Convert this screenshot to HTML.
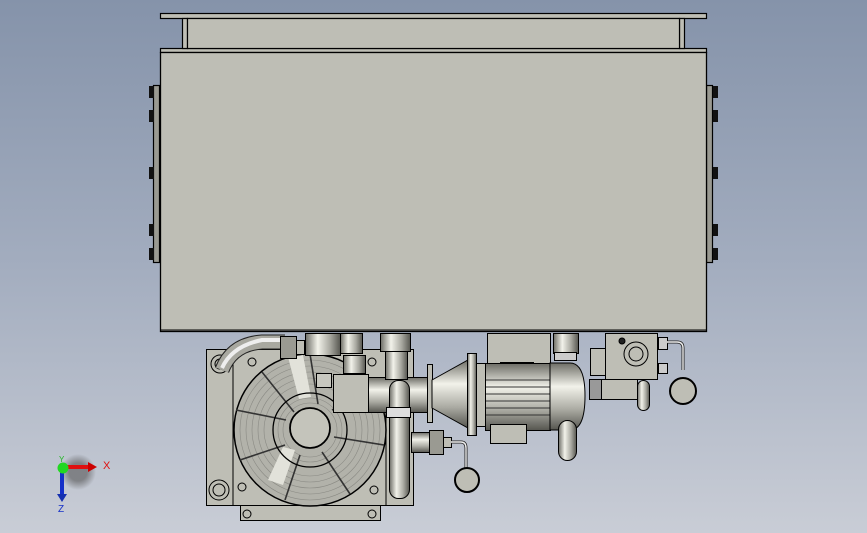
<!DOCTYPE html>
<html><head><meta charset="utf-8"><style>
html,body{margin:0;padding:0;width:867px;height:533px;overflow:hidden}
body{background:linear-gradient(#8593aa 0%,#a3adbf 50%,#c9cdd6 100%)}
svg{position:absolute;left:0;top:0}
text{font-family:"Liberation Sans",sans-serif}
</style></head><body>
<svg width="867" height="533" viewBox="0 0 867 533">
<defs>
<linearGradient id="pv" x1="0" x2="1"><stop offset="0" stop-color="#6d6d66"/><stop offset=".35" stop-color="#f2f2ea"/><stop offset=".7" stop-color="#a9a9a1"/><stop offset="1" stop-color="#55554f"/></linearGradient>
<linearGradient id="ph" x1="0" y1="0" x2="0" y2="1"><stop offset="0" stop-color="#6d6d66"/><stop offset=".35" stop-color="#f2f2ea"/><stop offset=".7" stop-color="#a9a9a1"/><stop offset="1" stop-color="#55554f"/></linearGradient>
<radialGradient id="sh" cx=".5" cy=".5" r=".5"><stop offset=".5" stop-color="#555" stop-opacity=".6"/><stop offset="1" stop-color="#555" stop-opacity="0"/></radialGradient>
</defs>
<g stroke="#000" stroke-width="1.2" fill="#bebeb5">
<rect x="160.5" y="13.5" width="546" height="5"/>
<rect x="160.5" y="48.5" width="546" height="4"/>
<rect x="182.5" y="18.5" width="5" height="30"/>
<rect x="679.5" y="18.5" width="5" height="30"/>
<rect x="187.5" y="18.5" width="492" height="30"/>
<rect x="153.5" y="85.5" width="6" height="177" fill="#9a9a92"/>
<rect x="706.5" y="85.5" width="6" height="177" fill="#9a9a92"/>
</g>
<g fill="#111">
<rect x="149" y="86" width="5" height="12"/><rect x="149" y="110" width="5" height="12"/><rect x="149" y="167" width="5" height="12"/><rect x="149" y="224" width="5" height="12"/><rect x="149" y="248" width="5" height="12"/>
<rect x="713" y="86" width="5" height="12"/><rect x="713" y="110" width="5" height="12"/><rect x="713" y="167" width="5" height="12"/><rect x="713" y="224" width="5" height="12"/><rect x="713" y="248" width="5" height="12"/>
</g>
<rect x="160.5" y="52.5" width="546" height="279" fill="#bebeb5" stroke="#000" stroke-width="1.3"/>
<line x1="160" y1="330" x2="706" y2="330" stroke="#000"/>

<g stroke="#000" stroke-width="1" fill="#bebeb5">
<rect x="240.5" y="505.5" width="140" height="15"/>
<circle cx="247" cy="514" r="4"/><circle cx="372" cy="514" r="4"/>
<rect x="206.5" y="349.5" width="207" height="156"/>
<line x1="233" y1="350" x2="233" y2="505"/><line x1="386" y1="350" x2="386" y2="505"/>
<circle cx="220" cy="364" r="9"/><circle cx="220" cy="364" r="5"/>
<circle cx="219" cy="490" r="10"/><circle cx="219" cy="490" r="6"/>
<circle cx="252" cy="362" r="4"/><circle cx="372" cy="362" r="4"/><circle cx="242" cy="487" r="4"/><circle cx="374" cy="490" r="4"/>
<circle cx="310" cy="430" r="76" fill="#b2b2aa" stroke-width="1.5"/>
<g fill="none" stroke="#8a8a84" stroke-width=".6">
<circle cx="310" cy="430" r="70"/><circle cx="310" cy="430" r="64"/><circle cx="310" cy="430" r="58"/><circle cx="310" cy="430" r="52"/><circle cx="310" cy="430" r="46"/><circle cx="310" cy="430" r="32"/><circle cx="310" cy="430" r="27"/>
</g>
<path d="M288 357 l15 -2 l8 42 l-12 2z M268 480 l15 5 l12 -35 l-12 -3z" fill="#e2e2da" stroke="none"/>
<path d="M310 354 l8 50 M372 390 l-40 20 M384 445 l-50 -8 M350 494 l-28 -42 M285 500 l15 -45 M240 460 l45 -15 M236 410 l50 10 M262 372 l32 40" stroke="#333" stroke-width="1.6" fill="none"/>
<circle cx="310" cy="430" r="37" fill="none" stroke-width="1.3"/>
<circle cx="310" cy="428" r="20" fill="#c4c4bb" stroke-width="1.8"/>
<path d="M222 370 Q232 344 262 342 L285 342" stroke="#222" stroke-width="15" fill="none"/>
<path d="M222 370 Q232 344 262 342 L285 342" stroke="#a8a8a0" stroke-width="13" fill="none"/>
<path d="M222 368 Q232 346 262 340 L285 340" stroke="#eee" stroke-width="4" fill="none"/>
<rect x="280.5" y="336.5" width="16" height="22" fill="#9a9a92"/>
<rect x="296.5" y="340.5" width="8" height="14"/>
<rect x="305.5" y="333.5" width="35" height="22" fill="url(#pv)"/>
<rect x="340.5" y="333.5" width="22" height="20" fill="url(#pv)"/>
<rect x="316.5" y="373.5" width="15" height="14" fill="#c8c8c0"/>
<rect x="333.5" y="374.5" width="35" height="38"/>
<rect x="343.5" y="355.5" width="22" height="18" fill="url(#pv)"/>
<rect x="368.5" y="377.5" width="62" height="35" fill="url(#ph)"/>
<rect x="380.5" y="333.5" width="30" height="18" fill="url(#pv)"/>
<rect x="385.5" y="351.5" width="22" height="28" fill="url(#pv)"/>
<rect x="389.5" y="380.5" width="20" height="118" rx="9" fill="url(#pv)"/>
<rect x="386.5" y="407.5" width="24" height="10" fill="#ddd"/>
<rect x="411.5" y="432.5" width="18" height="20" fill="url(#ph)"/>
<rect x="429.5" y="430.5" width="14" height="24" fill="#9a9a92"/>
<rect x="443.5" y="437.5" width="8" height="10"/>
<path d="M451 442 h10 q5 0 5 6 v20" stroke="#222" stroke-width="3" fill="none"/>
<path d="M451 442 h10 q5 0 5 6 v20" stroke="#eee" stroke-width="1.4" fill="none"/>
<circle cx="467" cy="480" r="12" stroke-width="2"/>
<rect x="427.5" y="364.5" width="5" height="58"/>
<path d="M432 380 L468 360 L468 428 L432 408 Z" fill="url(#ph)"/>
<rect x="467.5" y="353.5" width="9" height="82" fill="url(#pv)"/>
<rect x="476.5" y="363.5" width="10" height="63"/>
<rect x="487.5" y="333.5" width="63" height="30"/>
<rect x="500.5" y="362.5" width="33" height="10" fill="#888880"/>
<rect x="485.5" y="363.5" width="65" height="67" fill="url(#ph)"/>
<path d="M486 380 h64 M486 387 h64 M486 394 h64 M486 401 h64 M486 408 h64 M486 415 h64" stroke="#333" fill="none"/>
<rect x="490.5" y="424.5" width="36" height="19" fill="#bebeb5"/>
<path d="M550 363 h20 q15 0 15 33 q0 34 -15 34 h-20z" fill="url(#ph)"/>
<rect x="558.5" y="420.5" width="18" height="40" rx="9" fill="url(#pv)"/>
<rect x="553.5" y="333.5" width="25" height="20" fill="url(#pv)"/>
<rect x="554.5" y="352.5" width="22" height="8" fill="#ccc"/>
<rect x="605.5" y="333.5" width="52" height="46"/>
<rect x="590.5" y="348.5" width="15" height="27"/>
<circle cx="636" cy="354" r="12"/><circle cx="636" cy="354" r="7"/>
<circle cx="622" cy="341" r="3" fill="#222"/>
<rect x="589.5" y="379.5" width="12" height="20" fill="#999"/>
<rect x="601.5" y="379.5" width="36" height="20"/>
<rect x="637.5" y="380.5" width="12" height="30" rx="6" fill="url(#pv)"/>
<rect x="658.5" y="337.5" width="9" height="12" fill="#ccc"/>
<rect x="658.5" y="363.5" width="9" height="10" fill="#ccc"/>
<path d="M667 342 h10 q6 0 6 6 v22" stroke="#222" stroke-width="3" fill="none"/>
<path d="M667 342 h10 q6 0 6 6 v22" stroke="#eee" stroke-width="1.4" fill="none"/>
<circle cx="683" cy="391" r="13" stroke-width="2"/>
</g>

<circle cx="78" cy="472" r="18" fill="url(#sh)"/>
<path d="M64 467 h26" stroke="#e01010" stroke-width="4"/>
<path d="M88 462 l9 5 l-9 5z" fill="#c00"/>
<path d="M62 470 v24" stroke="#1530c8" stroke-width="4"/>
<path d="M57 494 h10 l-5 8z" fill="#1530b0"/>
<circle cx="63" cy="468" r="5.5" fill="#22d822"/>
<text x="103" y="469" font-size="11" fill="#e01010">X</text>
<text x="58" y="512" font-size="10" fill="#1530c8">Z</text>
<text x="59" y="462" font-size="8" fill="#22b822">Y</text>
</svg>
</body></html>
